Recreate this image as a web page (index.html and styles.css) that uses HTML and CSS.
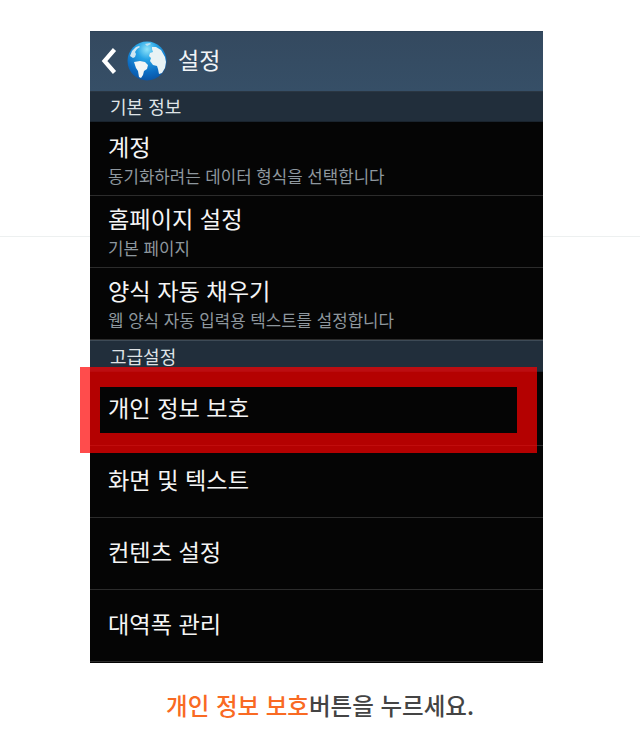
FILE: index.html
```html
<!DOCTYPE html>
<html lang="ko">
<head>
<meta charset="utf-8">
<title>설정</title>
<link rel="stylesheet" href="styles.css">
</head>
<body>
<div class="rule"></div>
<main class="phone">
  <header class="bar">
    <svg class="back" width="16" height="28" viewBox="0 0 16 28"><path d="M13.5 2.5 3.5 14 13.5 25.5" fill="none" stroke="#fff" stroke-width="4.2"/></svg>
    <svg class="globe" width="40" height="40" viewBox="0 0 40 40">
      <defs>
        <radialGradient id="sea" cx="50%" cy="20%" r="85%">
          <stop offset="0" stop-color="#8fe4fa"/>
          <stop offset=".3" stop-color="#27a4e6"/>
          <stop offset=".7" stop-color="#0c6cc2"/>
          <stop offset="1" stop-color="#0a4f9e"/>
        </radialGradient>
      </defs>
      <circle cx="20" cy="20" r="19.5" fill="url(#sea)"/>
      <path d="M3 15 5 10l4-4 3-1 1 1-3 2-2 3 1 2-1 3-2 1z" fill="#cfe6f2"/>
      <path d="M7 21l6-1 5 1 3 3-1 4-3 2-1 4-2 3-2-1-1-6-2-3z" fill="#f2f6f6"/>
      <path d="M25 6l4 0 5 3 4 7 1 5-1 6-3 5-3 1-1-5-1-3-4-1-3-4 1-3-2-2 1-3 3-1-1-3z" fill="#e9f2f4"/>
      <path d="M18 3l5-1 1 1-4 2z" fill="#bfe2f2"/>
    </svg>
    <h1 class="title">설정</h1>
  </header>
  <h2 class="section first">기본 정보</h2>
  <div class="row lead"><div class="name">계정</div><div class="sub">동기화하려는 데이터 형식을 선택합니다</div></div>
  <div class="row"><div class="name">홈페이지 설정</div><div class="sub">기본 페이지</div></div>
  <div class="row"><div class="name">양식 자동 채우기</div><div class="sub">웹 양식 자동 입력용 텍스트를 설정합니다</div></div>
  <h2 class="section">고급설정</h2>
  <div class="row single lead"><div class="name">개인 정보 보호</div></div>
  <div class="row single"><div class="name">화면 및 텍스트</div></div>
  <div class="row single"><div class="name">컨텐츠 설정</div></div>
  <div class="row single"><div class="name">대역폭 관리</div></div>
  <div class="mark"></div>
</main>
<p class="caption"><span class="accent">개인 정보 보호</span>버튼을 누르세요.</p>
</body>
</html>
```
FILE: styles.css
```css
* { box-sizing: border-box; }
html, body { margin: 0; padding: 0; background: #fff; }
body {
  position: relative;
  width: 640px;
  height: 740px;
  padding-top: 31px;
  overflow: hidden;
  font-family: "Noto Sans CJK KR", "Noto Sans", sans-serif;
}
.rule {
  position: absolute;
  left: 0;
  top: 236px;
  width: 640px;
  height: 1px;
  background: #edf0f0;
}
.phone {
  position: relative;
  width: 453px;
  height: 632px;
  margin-left: 90px;
  background: #050505;
}
.bar {
  display: flex;
  align-items: center;
  height: 60px;
  padding: 0 0 2px 11px;
  background: linear-gradient(#34495f, #364f67);
  border-top: 1px solid #2d4257;
}
.back { margin-right: 10px; }
.globe { margin-right: 11px; }
.title {
  margin: 0 0 2px;
  font-size: 23px;
  font-weight: 400;
  line-height: 1;
  color: #f2f4f6;
}
.section {
  display: flex;
  align-items: center;
  height: 32px;
  margin: 0;
  padding: 0 0 1px 20px;
  background: #212e3b;
  border-top: 1px solid #3d4a56;
  border-bottom: 1px solid #1a242e;
  font-size: 18px;
  font-weight: 400;
  color: #dfe3e6;
}
.section.first { height: 31px; border-top-color: #2a3642; padding-bottom: 2px; }
.row {
  display: flex;
  flex-direction: column;
  height: 72px;
  padding: 7px 0 0 18px;
  border-bottom: 1px solid #2c2c2c;
}
.row.lead { height: 74px; padding-top: 9px; }
.name {
  font-size: 23.2px;
  line-height: 30px;
  color: #f5f5f5;
}
.sub {
  margin-top: 4px;
  font-size: 16.8px;
  line-height: 22px;
  color: #8e979e;
}
.row.single { justify-content: center; padding-top: 0; padding-bottom: 6px; }
.row.single.lead { padding-top: 2px; }
.mark {
  position: absolute;
  left: -10px;
  top: 336px;
  width: 457px;
  height: 86px;
  border: 20px solid rgba(255, 0, 0, .7);
}
.caption {
  margin: 27px 0 0;
  text-align: center;
  font-size: 23.5px;
  font-weight: 500;
  line-height: 30px;
  color: #444;
}
.accent { color: #f96a23; }
```
